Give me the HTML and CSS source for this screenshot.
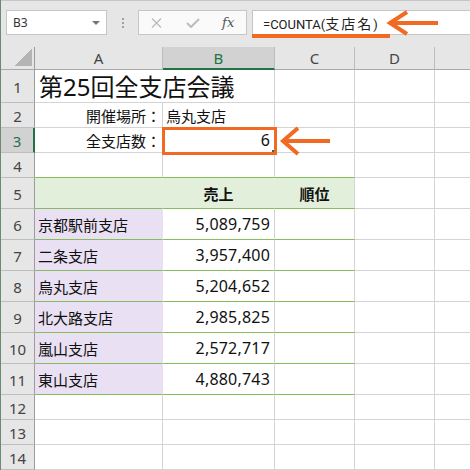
FILE: index.html
```html
<!DOCTYPE html>
<html lang="ja">
<head>
  <meta charset="UTF-8">
  <meta name="viewport" content="width=device-width, initial-scale=1.0">
  <title>全支店数 - COUNTA</title>
  <link rel="stylesheet" href="styles.css">
</head>
<body>
  <div class="window">
    <!-- 数式バー -->
    <div class="formula-bar">
      <div class="name-box">
        <span>B3</span>
        <span class="caret"></span>
      </div>
      <div class="grip"><i></i><i></i><i></i></div>
      <div class="fx-buttons">
        <span class="fx-btn">
          <svg width="11" height="10" viewBox="0 0 11 10"><path d="M1 0.5 L10 9.5 M10 0.5 L1 9.5" stroke="#bcbcbc" stroke-width="1.4" fill="none"/></svg>
        </span>
        <span class="fx-btn">
          <svg width="14" height="10" viewBox="0 0 14 10"><path d="M1 5 L5 9 L13 1" stroke="#bcbcbc" stroke-width="2" fill="none"/></svg>
        </span>
        <span class="fx-btn fx-label">fx</span>
      </div>
      <div class="formula-input">
        <span class="formula-text">=COUNTA(<span class="jp">支店名</span>)</span>
        <span class="mark"></span>
      </div>
    </div>

    <!-- シート -->
    <div class="sheet">
      <div class="ch corner"><span class="tri"></span></div>
      <div class="ch">A</div>
      <div class="ch sel-col">B</div>
      <div class="ch">C</div>
      <div class="ch">D</div>
      <div class="ch last"></div>

      <div class="rh">1</div>
      <div class="c title">第25回全支店会議</div>
      <div class="c"></div><div class="c"></div><div class="c"></div><div class="c last"></div>

      <div class="rh">2</div>
      <div class="c label">開催場所：</div>
      <div class="c">烏丸支店</div>
      <div class="c"></div><div class="c"></div><div class="c last"></div>

      <div class="rh sel-row">3</div>
      <div class="c label">全支店数：</div>
      <div class="c num active">6</div>
      <div class="c"></div><div class="c"></div><div class="c last"></div>

      <div class="rh">4</div>
      <div class="c g-bottom"></div><div class="c g-bottom"></div><div class="c g-bottom"></div>
      <div class="c"></div><div class="c last"></div>

      <div class="rh">5</div>
      <div class="c head head-in"></div>
      <div class="c head head-in">売上</div>
      <div class="c head">順位</div>
      <div class="c"></div><div class="c last"></div>

      <div class="rh">6</div>
      <div class="c shop">京都駅前支店</div>
      <div class="c num g-bottom">5,089,759</div>
      <div class="c g-bottom"></div>
      <div class="c"></div><div class="c last"></div>

      <div class="rh">7</div>
      <div class="c shop">二条支店</div>
      <div class="c num g-bottom">3,957,400</div>
      <div class="c g-bottom"></div>
      <div class="c"></div><div class="c last"></div>

      <div class="rh">8</div>
      <div class="c shop">烏丸支店</div>
      <div class="c num g-bottom">5,204,652</div>
      <div class="c g-bottom"></div>
      <div class="c"></div><div class="c last"></div>

      <div class="rh">9</div>
      <div class="c shop">北大路支店</div>
      <div class="c num g-bottom">2,985,825</div>
      <div class="c g-bottom"></div>
      <div class="c"></div><div class="c last"></div>

      <div class="rh">10</div>
      <div class="c shop">嵐山支店</div>
      <div class="c num g-bottom">2,572,717</div>
      <div class="c g-bottom"></div>
      <div class="c"></div><div class="c last"></div>

      <div class="rh">11</div>
      <div class="c shop">東山支店</div>
      <div class="c num g-bottom">4,880,743</div>
      <div class="c g-bottom"></div>
      <div class="c"></div><div class="c last"></div>

      <div class="rh">12</div>
      <div class="c"></div><div class="c"></div><div class="c"></div><div class="c"></div><div class="c last"></div>

      <div class="rh">13</div>
      <div class="c"></div><div class="c"></div><div class="c"></div><div class="c"></div><div class="c last"></div>

      <div class="rh">14</div>
      <div class="c"></div><div class="c"></div><div class="c"></div><div class="c"></div><div class="c last"></div>
    </div>

    <!-- 説明用の矢印 -->
    <svg class="arrow arrow-formula" width="58" height="32" viewBox="0 0 58 32">
      <path d="M4 15 L53 15 M22 4 L5 15 L22 26" stroke="#f26a21" stroke-width="4" fill="none"/>
    </svg>
    <svg class="arrow arrow-cell" width="56" height="34" viewBox="0 0 56 34">
      <path d="M4 17 L52 17 M20 4 L5 17 L20 30" stroke="#f26a21" stroke-width="4" fill="none"/>
    </svg>
  </div>
</body>
</html>
```

FILE: styles.css
```css
/* Estilos generales */
body {
  margin: 0;
  font-family: "Noto Sans", "Noto Sans CJK JP", sans-serif;
  color: #111;
}
.window {
  position: relative;
  width: 470px;
  height: 470px;
  overflow: hidden;
  background: #fff;
  border-left: 1px solid #6a8a74;
  box-sizing: border-box;
}

/* Barra de fórmulas */
.formula-bar {
  height: 47px;
  box-sizing: border-box;
  border-top: 1px solid #c6c6c6;
  padding-top: 9px;
  background: #e6e6e6;
  display: flex;
  align-items: flex-start;
}
.name-box {
  width: 101px;
  height: 25px;
  margin-left: 5px;
  box-sizing: border-box;
  border: 1px solid #c6c6c6;
  background: #fff;
  display: flex;
  align-items: center;
  justify-content: space-between;
  padding: 0 6px;
  font-size: 12px;
  color: #333;
}
.caret {
  width: 0;
  height: 0;
  border-left: 4px solid transparent;
  border-right: 4px solid transparent;
  border-top: 4px solid #777;
}
.grip {
  width: 31px;
  height: 25px;
  display: flex;
  flex-direction: column;
  align-items: center;
  justify-content: center;
  gap: 2px;
}
.grip i {
  width: 2px;
  height: 2px;
  background: #a0a0a0;
}
.fx-buttons {
  width: 109px;
  height: 25px;
  box-sizing: border-box;
  border: 1px solid #c6c6c6;
  background: #fafafa;
  display: flex;
  align-items: center;
}
.fx-btn {
  flex: 1;
  display: flex;
  justify-content: center;
  align-items: center;
}
.fx-label {
  font-family: "DejaVu Serif", "Liberation Serif", serif;
  font-style: italic;
  font-size: 13px;
  color: #555;
}
.formula-input {
  position: relative;
  flex: 1;
  height: 25px;
  margin-left: 5px;
  margin-right: -3px;
  box-sizing: border-box;
  border: 1px solid #c6c6c6;
  background: #fff;
  display: flex;
  align-items: center;
  padding-left: 10px;
}
.formula-text {
  font-family: Roboto, "Noto Sans CJK JP", sans-serif;
  font-size: 13px;
  color: #222;
}
.formula-text .jp {
  font-family: "Noto Sans CJK JP", sans-serif;
  font-size: 14px;
  letter-spacing: 2px;
}
.mark {
  position: absolute;
  left: -1px;
  bottom: -4px;
  width: 138px;
  height: 4px;
  background: #f26a21;
}

/* Hoja */
.sheet {
  display: grid;
  grid-template-columns: 34px 128px 112px 80px 80px 1fr;
  grid-template-rows: 23px 33px 25px 25px 25px repeat(7, 31px) repeat(3, 25px);
}
.sheet > div {
  box-sizing: border-box;
  display: flex;
  align-items: center;
  white-space: nowrap;
  font-size: 15px;
}
.ch {
  background: #e6e6e6;
  border-right: 1px solid #bdbdbd;
  border-bottom: 1px solid #a9a9a9;
  justify-content: center;
  color: #444;
}
.corner {
  justify-content: flex-end !important;
  align-items: flex-end !important;
  padding: 0 2px 3px 0;
  border-right-color: #9c9c9c;
}
.tri {
  width: 17px;
  height: 17px;
  background: linear-gradient(to bottom right, transparent 50%, #b4b4b4 50%);
}
.rh {
  background: #e6e6e6;
  border-right: 1px solid #9c9c9c;
  border-bottom: 1px solid #bdbdbd;
  justify-content: center;
  padding-top: 2px;
  color: #444;
}
.sel-col {
  background: #d2d2d2;
  border-bottom: 2px solid #217346;
  color: #217346;
}
.sel-row {
  background: #d2d2d2;
  border-right: 2px solid #217346;
  color: #217346;
}
.c {
  border-right: 1px solid #d4d4d4;
  border-bottom: 1px solid #d4d4d4;
  padding: 0 3px;
}
.last {
  border-right: none !important;
}
.title {
  font-size: 24px !important;
  border-right: none;
  padding-left: 4px;
  padding-bottom: 2px;
}
.label {
  justify-content: flex-end;
  padding-right: 1px;
}
.num {
  justify-content: flex-end;
  padding-right: 4px;
  font-size: 16px !important;
  letter-spacing: 0.2px;
}
.g-bottom {
  border-bottom-color: #86bc5c;
}
.head {
  background: #e2efda;
  border-bottom-color: #86bc5c;
  justify-content: center;
  font-weight: bold;
}
.head-in {
  border-right-color: #e2efda;
}
.shop {
  background: #e9e0f3;
  border-right-color: #e9e0f3;
  border-bottom-color: #86bc5c;
}

/* Celda activa con marco naranja */
.active {
  position: relative;
}
.active::before {
  content: "";
  position: absolute;
  right: 0;
  bottom: 0;
  width: 2px;
  height: 2px;
  background: #217346;
}
.active::after {
  content: "";
  position: absolute;
  left: -1px;
  top: -1px;
  right: -3px;
  bottom: -3px;
  border: 3px solid #f26a21;
}

/* Flechas */
.arrow {
  position: absolute;
}
.arrow-formula {
  left: 384px;
  top: 8px;
}
.arrow-cell {
  left: 277px;
  top: 124px;
}
```
